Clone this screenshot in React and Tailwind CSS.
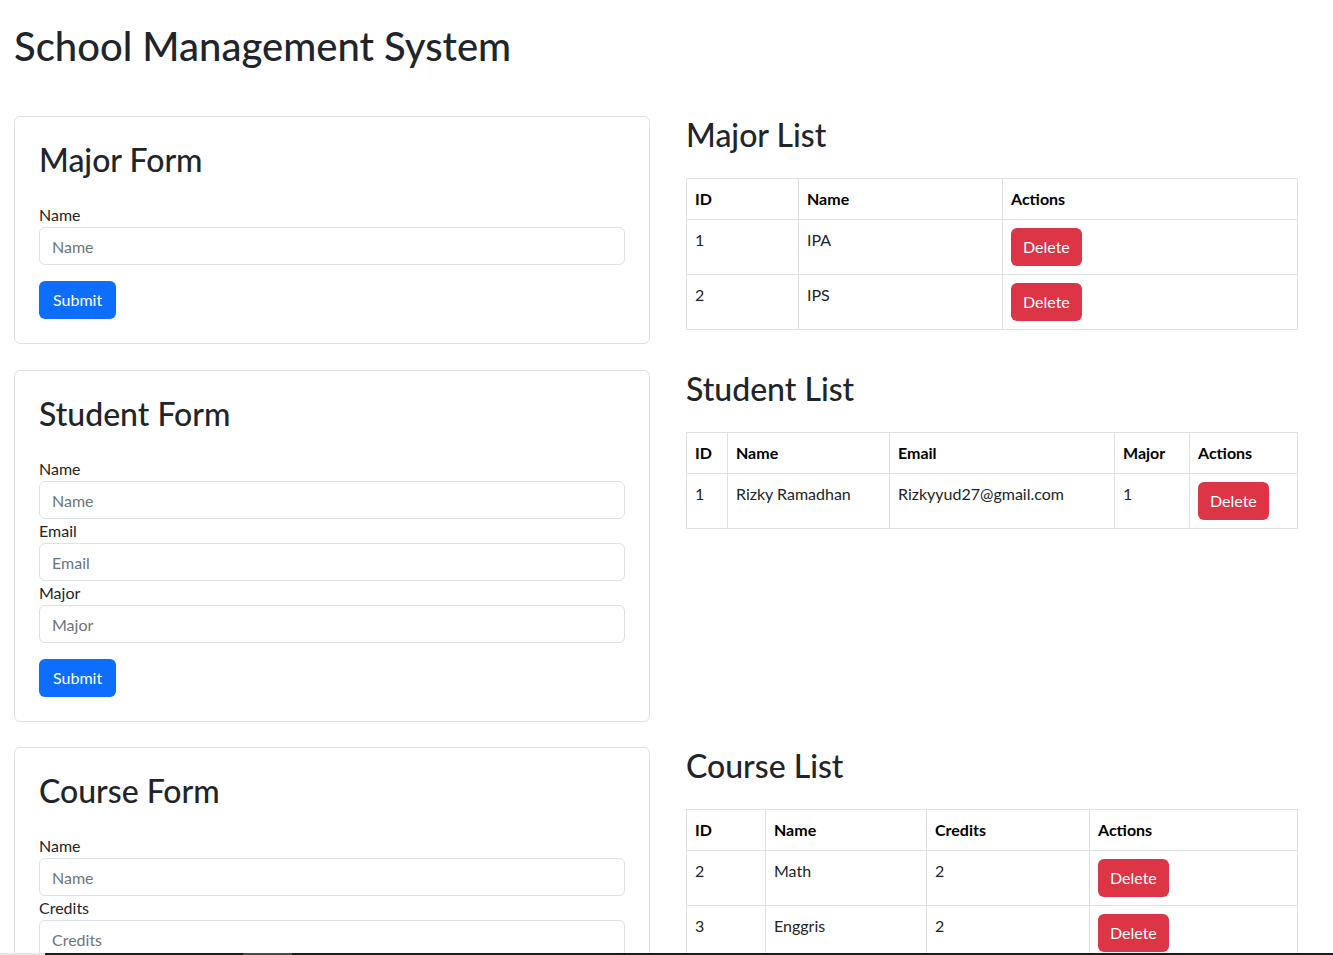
import React from "react";

const font = { fontFamily: "Lato, 'Noto Sans', sans-serif" };

const Field = ({ label }) => (
  <div>
    <label className="block text-[16px] leading-6 text-[#212529]">{label}</label>
    <input
      placeholder={label}
      className="block w-full h-[38px] px-3 text-[16px] border border-[#dee2e6] rounded-md placeholder:text-[#6c757d] outline-none"
    />
  </div>
);

const FormCard = ({ title, fields }) => (
  <div className="border border-[#dee2e6] rounded-md p-6 bg-white">
    <h2 className="text-[32px] leading-[38px] font-medium text-[#212529] mb-6">{title}</h2>
    {fields.map((f) => (
      <Field key={f} label={f} />
    ))}
    <button className="mt-4 h-[38px] px-[14px] bg-[#0d6efd] text-white text-[16px] rounded-md">Submit</button>
  </div>
);

const DeleteBtn = () => (
  <button className="h-[38px] px-3 bg-[#dc3545] text-white text-[16px] rounded-md">Delete</button>
);

const ListTable = ({ title, cols, widths, rows }) => (
  <div>
    <h2 className="text-[32px] leading-[38px] font-medium text-[#212529] mb-6">{title}</h2>
    <table className="w-[611px] border-collapse table-fixed">
      <colgroup>
        {widths.map((w, i) => (
          <col key={i} style={{ width: w }} />
        ))}
      </colgroup>
      <thead>
        <tr>
          {cols.map((c) => (
            <th key={c} className="border border-[#dee2e6] px-2 py-2 text-left font-bold text-[16px] leading-6 text-black">
              {c}
            </th>
          ))}
        </tr>
      </thead>
      <tbody>
        {rows.map((r, i) => (
          <tr key={i}>
            {r.map((v, j) => (
              <td key={j} className="border border-[#dee2e6] px-2 py-2 align-top text-[16px] leading-6 text-[#212529]">
                {v}
              </td>
            ))}
            <td className="border border-[#dee2e6] px-2 py-2 align-top">
              <DeleteBtn />
            </td>
          </tr>
        ))}
      </tbody>
    </table>
  </div>
);

export default function App() {
  return (
    <div className="min-h-screen bg-white pl-[14px] pt-[22px]" style={font}>
      <h1 className="text-[40px] leading-[48px] font-medium text-[#212529] mb-[46px]">School Management System</h1>

      <div className="flex gap-[36px] mb-[26px]">
        <div className="w-[636px]">
          <FormCard title="Major Form" fields={["Name"]} />
        </div>
        <div className="w-[612px]">
          <ListTable
            title="Major List"
            cols={["ID", "Name", "Actions"]}
            widths={[112, 204, 295]}
            rows={[["1", "IPA"], ["2", "IPS"]]}
          />
        </div>
      </div>

      <div className="flex gap-[36px] mb-[25px]">
        <div className="w-[636px]">
          <FormCard title="Student Form" fields={["Name", "Email", "Major"]} />
        </div>
        <div className="w-[612px]">
          <ListTable
            title="Student List"
            cols={["ID", "Name", "Email", "Major", "Actions"]}
            widths={[41, 162, 225, 75, 108]}
            rows={[["1", "Rizky Ramadhan", "Rizkyyud27@gmail.com", "1"]]}
          />
        </div>
      </div>

      <div className="flex gap-[36px]">
        <div className="w-[636px]">
          <FormCard title="Course Form" fields={["Name", "Credits"]} />
        </div>
        <div className="w-[612px]">
          <ListTable
            title="Course List"
            cols={["ID", "Name", "Credits", "Actions"]}
            widths={[79, 161, 163, 208]}
            rows={[["2", "Math", "2"], ["3", "Enggris", "2"]]}
          />
        </div>
      </div>

      <div className="fixed bottom-0 left-0 right-0 h-[2px] flex">
        <div className="w-[45px] bg-[#e6e6e6]" />
        <div className="w-[198px] bg-[#1c1c1c]" />
        <div className="w-[49px] bg-[#4a4a4a]" />
        <div className="flex-1 bg-[#1c1c1c]" />
      </div>
    </div>
  );
}
